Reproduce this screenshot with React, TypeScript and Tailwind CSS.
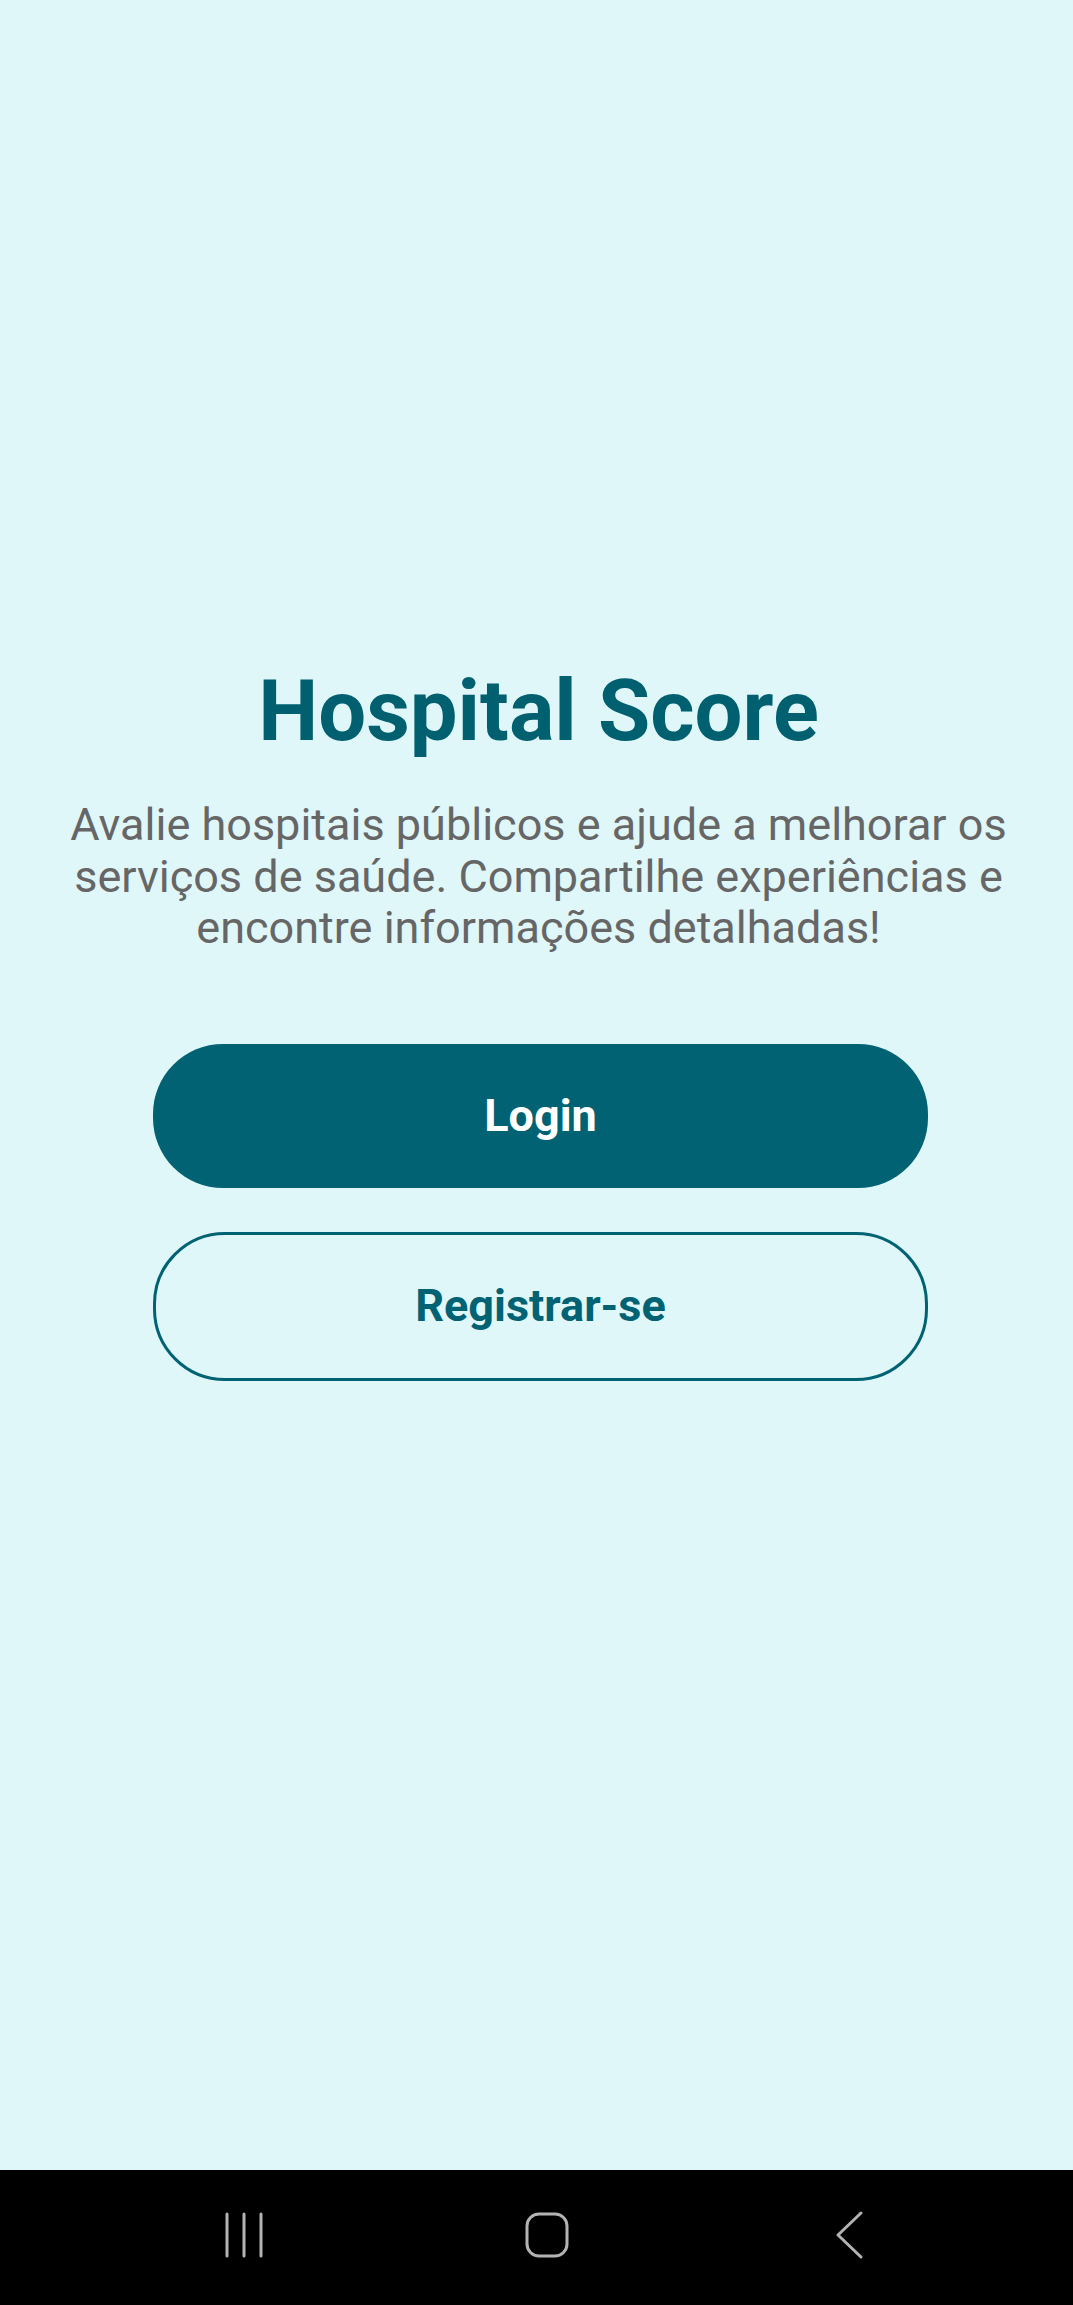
import React from "react";

const NavBar = () => (
  <div className="h-[135px] bg-black flex items-center">
    <svg width="1073" height="135" viewBox="0 0 1073 135" className="block">
      <g stroke="#b3b3b3" strokeWidth="3" strokeLinecap="round" fill="none">
        <line x1="227" y1="44" x2="227" y2="86" />
        <line x1="244" y1="44" x2="244" y2="86" />
        <line x1="261" y1="44" x2="261" y2="86" />
        <rect x="527" y="44" width="40" height="42" rx="12" />
        <polyline points="861,43 838,65 861,87" strokeLinejoin="round" />
      </g>
    </svg>
  </div>
);

export default function App() {
  return (
    <div
      className="w-[1073px] h-[2305px] flex flex-col bg-[#e0f7fa]"
      style={{ fontFamily: "Roboto, 'Liberation Sans', sans-serif" }}
    >
      <main className="flex-1 flex flex-col items-center pt-[661px] px-[56px]">
        <h1 className="ml-[4px] text-[85px] leading-[100px] font-bold text-[#00606f] text-center">
          Hospital Score
        </h1>
        <p className="mt-[38px] ml-[4px] text-[45px] leading-[51.5px] text-[#666666] text-center">
          Avalie hospitais públicos e ajude a melhorar os serviços de saúde.
          Compartilhe experiências e encontre informações detalhadas!
        </p>
        <div className="mt-[90px] ml-[8px] w-[775px] flex flex-col gap-[44px]">
          <button className="h-[144px] w-full rounded-[70px] bg-[#006272] text-white text-[45px] font-bold">
            Login
          </button>
          <button className="h-[149px] w-full rounded-[72px] border-[3px] border-[#006272] text-[#006272] text-[45px] font-bold">
            Registrar-se
          </button>
        </div>
      </main>
      <NavBar />
    </div>
  );
}
